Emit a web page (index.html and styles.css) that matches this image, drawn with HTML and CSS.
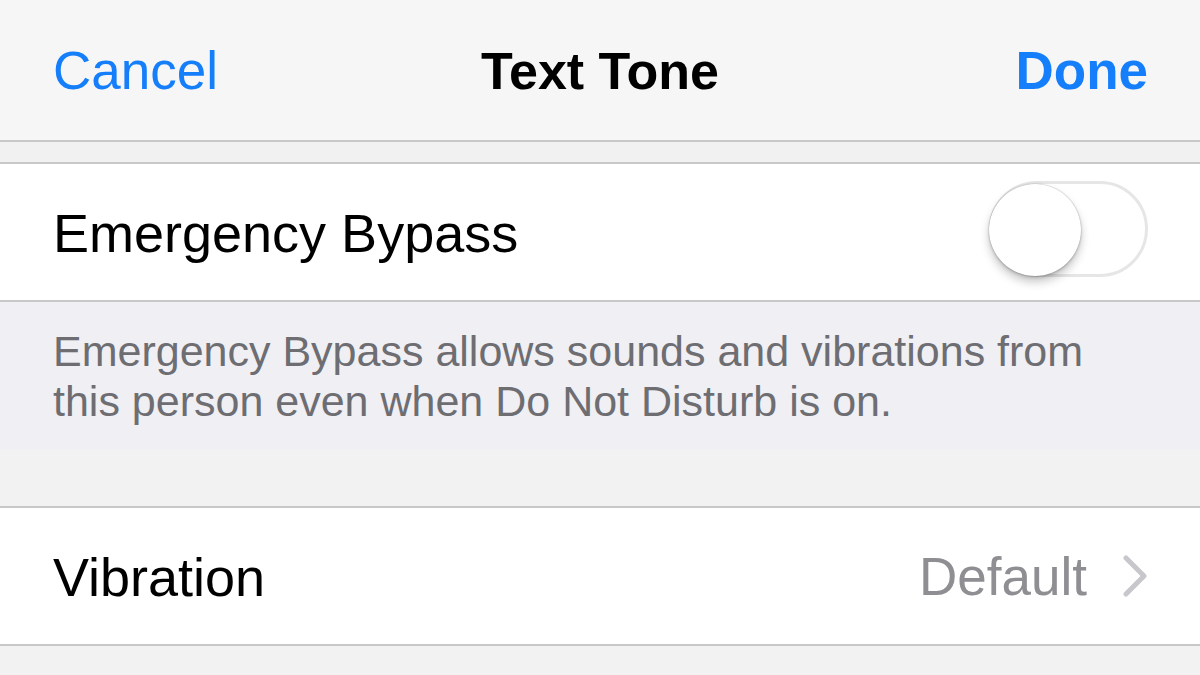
FILE: index.html
```html
<!DOCTYPE html>
<html lang="en">
<head>
<meta charset="utf-8">
<title>Text Tone</title>
<link rel="stylesheet" href="styles.css">
</head>
<body>
<header class="nav">
  <span class="nav-btn nav-cancel">Cancel</span>
  <span class="nav-title">Text Tone</span>
  <span class="nav-btn nav-done">Done</span>
</header>
<div class="spacer spacer-top"></div>
<section class="group">
  <div class="row">
    <span class="row-label">Emergency Bypass</span>
    <span class="switch"><span class="knob"></span></span>
  </div>
</section>
<p class="footer-note">Emergency Bypass allows sounds and vibrations from<br>this person even when Do Not Disturb is on.</p>
<div class="spacer spacer-mid"></div>
<section class="group">
  <div class="row">
    <span class="row-label">Vibration</span>
    <span class="row-value">Default</span>
    <svg class="chevron" width="25" height="42" viewBox="0 0 25 42"><polyline points="3,3 21,21 3,39" fill="none" stroke="#c7c7cc" stroke-width="5" stroke-linecap="round" stroke-linejoin="round"/></svg>
  </div>
</section>
</body>
</html>
```
FILE: styles.css
```css
html, body {
  margin: 0;
  padding: 0;
}
body {
  background: #f2f2f2;
  font-family: "Liberation Sans", Arial, sans-serif;
  width: 1200px;
  height: 675px;
  overflow: hidden;
}
.nav {
  height: 140px;
  background: #f6f6f6;
  border-bottom: 2px solid #c8c8c8;
  display: flex;
  align-items: center;
  justify-content: space-between;
  padding: 0 52px 0 53px;
  position: relative;
}
.nav-btn {
  font-size: 53px;
  line-height: 60px;
  color: #157efb;
  margin-top: 2px;
}
.nav-done {
  font-weight: bold;
}
.nav-title {
  position: absolute;
  left: 0;
  right: 0;
  text-align: center;
  font-size: 52px;
  line-height: 60px;
  font-weight: bold;
  color: #000;
  margin-top: 2px;
  pointer-events: none;
}
.spacer-top {
  height: 20px;
  background: #f1f1f1;
}
.group {
  background: #fff;
  border-top: 2px solid #c8c8c8;
  border-bottom: 2px solid #c8c8c8;
}
.row {
  height: 136px;
  display: flex;
  align-items: center;
  padding: 0 52px 0 53px;
}
.row-label {
  flex: 1;
  font-size: 54px;
  line-height: 60px;
  color: #000;
  margin-top: 2px;
}
.row-value {
  font-size: 53px;
  line-height: 60px;
  color: #8e8e93;
  margin-right: 36px;
  margin-top: 2px;
}
.chevron {
  display: block;
}
.switch {
  width: 159px;
  height: 96px;
  box-sizing: border-box;
  border: 3px solid #e6e6e6;
  border-radius: 48px;
  background: #fff;
  display: flex;
  align-items: center;
  margin-top: -6px;
}
.knob {
  width: 92px;
  height: 92px;
  border-radius: 50%;
  background: #fff;
  margin-left: -3px;
  margin-top: 2px;
  box-shadow: 0 6px 10px rgba(0, 0, 0, 0.22), 0 0 1.5px rgba(0, 0, 0, 0.35), 0 2px 3px rgba(0, 0, 0, 0.12);
}
.footer-note {
  margin: 0;
  background: #efeff4;
  padding: 24px 53px 24px 53px;
  font-size: 43px;
  line-height: 50px;
  color: #6d6d72;
  height: 100px;
}
.spacer-mid {
  height: 56px;
  background: #f2f2f2;
}
```
